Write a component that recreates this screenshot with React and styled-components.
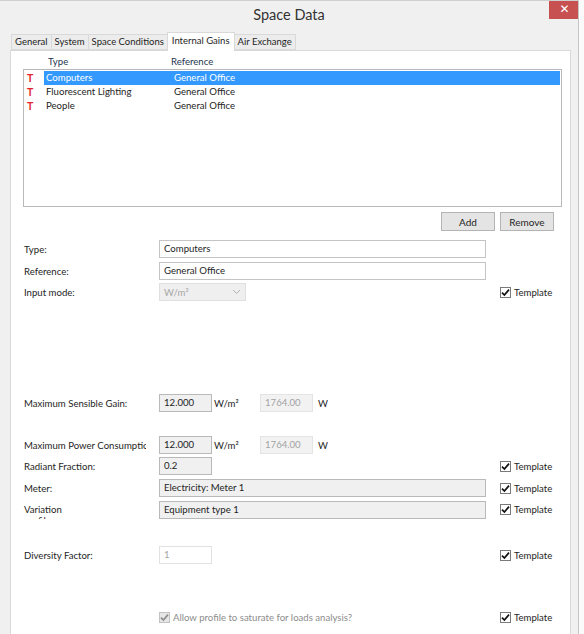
import React from 'react'
import styled, { createGlobalStyle } from 'styled-components'

const GlobalStyle = createGlobalStyle`
  html, body {
    margin: 0;
    padding: 0;
  }
  body {
    background: #fafafa;
    font-family: Lato, "Liberation Sans", sans-serif;
    font-size: 9.6px;
    color: #1e1e1e;
  }
`

/**
 * window chrome
 */
const Window = styled.div`
  width: 579px;
  height: 634px;
  box-sizing: border-box;
  display: flex;
  flex-direction: column;
  overflow: hidden;
  background: #f0f0f0;
  border-top: 1px solid #cfcfcf;
  border-right: 1px solid #c6c6c6;
`

const TitleBar = styled.header`
  height: 30px;
  flex: none;
  display: grid;
  grid-template-columns: 1fr auto 1fr;
  align-items: start;
`

const Title = styled.h1`
  grid-column: 2;
  margin: 0;
  line-height: 27px;
  font-size: 14.5px;
  font-weight: 400;
  color: #333;
`

const CloseButton = styled.button`
  grid-column: 3;
  justify-self: end;
  width: 31px;
  height: 19px;
  margin: -1px -2px 0 0;
  padding: 0;
  border: none;
  background: #c75050;
  color: #fff;
  font-family: "DejaVu Sans", sans-serif;
  font-size: 12px;
  font-weight: 700;
  line-height: 19px;
`

/**
 * tabs
 */
const TabStrip = styled.nav`
  display: flex;
  align-items: flex-end;
  height: 20px;
  flex: none;
  padding-left: 12px;
  margin-bottom: -1px;
  position: relative;
  z-index: 1;
`

const Tab = styled.div`
  height: ${p => (p.$active ? '19px' : '16px')};
  box-sizing: border-box;
  padding: 0 ${p => (p.$active ? '4px' : '3px')};
  margin-left: -1px;
  margin-bottom: ${p => (p.$active ? '0' : '1px')};
  border: 1px solid #d9d9d9;
  border-bottom: ${p => (p.$active ? 'none' : '1px solid #d9d9d9')};
  background: ${p => (p.$active ? '#fff' : '#ececec')};
  line-height: ${p => (p.$active ? '16px' : '14px')};
  font-size: 9.5px;
  color: #1e1e1e;
  white-space: nowrap;
`

const Panel = styled.section`
  flex: 1;
  margin-left: 10px;
  width: 561px;
  box-sizing: border-box;
  background: #fff;
  border: 1px solid #d9d9d9;
  border-bottom: none;
  padding: 4px 8px 0 12px;
  display: flex;
  flex-direction: column;
`

/**
 * gains list
 */
const ListHeader = styled.div`
  display: grid;
  grid-template-columns: 25px 123px 1fr;
  height: 14px;
  line-height: 13px;
  color: #1f3552;
`

const ListBox = styled.div`
  height: 138px;
  box-sizing: border-box;
  border: 1px solid #b9b9b9;
  padding: 1px 1px 0 0;
`

const Line = styled.div`
  display: grid;
  grid-template-columns: 20px 1fr;
  height: 14px;
  line-height: 14px;
`

const TemplateMark = styled.span`
  padding-left: 3px;
  color: #e3252b;
  font-weight: 700;
  font-size: 10.5px;
`

const Cells = styled.div`
  display: grid;
  grid-template-columns: 128px 1fr;
  background: ${p => (p.$selected ? '#3399ff' : 'transparent')};
  color: ${p => (p.$selected ? '#fff' : '#1e1e1e')};

  span {
    padding-left: 2px;
  }
`

const ButtonRow = styled.div`
  display: flex;
  justify-content: flex-end;
  gap: 5px;
  margin-top: 5px;
  padding-right: 8px;
`

const Button = styled.button`
  width: 54px;
  height: 19px;
  padding: 0;
  border: 1px solid #b4b4b4;
  background: #e4e4e4;
  font-family: inherit;
  font-size: 10px;
  color: #1e1e1e;
`

/**
 * form
 */
const Row = styled.div`
  display: grid;
  grid-template-columns: 136px 341px 1fr;
  align-items: center;
  height: 18px;
  margin-top: ${p => p.$gap}px;
`

const Label = styled.div`
  width: 122px;
  padding-left: 1px;
  overflow: hidden;
  white-space: nowrap;
  color: #1e1e1e;
`

const WrappedLabel = styled(Label)`
  width: 60px;
  white-space: normal;
  align-self: start;
  margin-top: 4px;
  height: 15px;
  line-height: 11px;
`

const Field = styled.div`
  width: ${p => p.$width}px;
  height: 18px;
  box-sizing: border-box;
  padding-left: 4px;
  line-height: 16px;
  white-space: nowrap;
  overflow: hidden;
  border: 1px solid ${p => ({ plain: '#c4c4c4', filled: '#b9b9b9', readout: '#e4e4e4', ghost: '#e2e2e2' }[p.$kind])};
  background: ${p => ({ plain: '#fff', filled: '#f0f0f0', readout: '#f2f2f2', ghost: '#fff' }[p.$kind])};
  color: ${p => (p.$kind === 'readout' || p.$kind === 'ghost' ? '#a3a3a3' : '#1e1e1e')};
`

const Select = styled.div`
  width: 87px;
  height: 18px;
  box-sizing: border-box;
  padding: 0 4px;
  display: flex;
  align-items: center;
  justify-content: space-between;
  border: 1px solid #e0e0e0;
  background: #efefef;
  color: #a8a8a8;
`

const Inline = styled.div`
  display: flex;
  align-items: center;
`

const Unit = styled.span`
  width: ${p => p.$width}px;
  padding-left: ${p => p.$pad}px;
  box-sizing: border-box;
  color: #1e1e1e;
`

const Tick = styled.label`
  display: flex;
  align-items: center;
  gap: 3px;
  color: ${p => (p.$disabled ? '#8c8c8c' : '#1e1e1e')};
`

const Box = styled.span`
  width: 11px;
  height: 11px;
  box-sizing: border-box;
  border: 1px solid ${p => (p.$disabled ? '#c2c2c2' : '#7a7a7a')};
  background: ${p => (p.$disabled ? '#e6e6e6' : '#fff')};
  display: flex;
  align-items: center;
  justify-content: center;
`

const Check = ({ disabled }) => (
  <Box $disabled={disabled}>
    <svg width="9" height="9" viewBox="0 0 9 9">
      <path d="M1 4.6 L3.4 7 L8 1.6" fill="none" stroke={disabled ? '#8e8e8e' : '#111'} strokeWidth="1.7" />
    </svg>
  </Box>
)

const CheckBox = ({ children, disabled }) => (
  <Tick $disabled={disabled}>
    <Check disabled={disabled} />
    {children}
  </Tick>
)

const Chevron = () => (
  <svg width="9" height="6" viewBox="0 0 9 6">
    <path d="M1 1 L4.5 4.5 L8 1" fill="none" stroke="#b0b0b0" strokeWidth="1" />
  </svg>
)

const gains = [
  { type: 'Computers', reference: 'General Office' },
  { type: 'Fluorescent Lighting', reference: 'General Office' },
  { type: 'People', reference: 'General Office' }
]

const tabs = ['General', 'System', 'Space Conditions', 'Internal Gains', 'Air Exchange']

// sensible/power gain: per-area value, unit and the computed total
const GainRow = ({ value }) => (
  <Inline>
    <Field $kind="filled" $width={53}>{value}</Field>
    <Unit $width={48} $pad={2}>W/m²</Unit>
    <Field $kind="readout" $width={53}>1764.00</Field>
    <Unit $width={20} $pad={5}>W</Unit>
  </Inline>
)

const App = () => {
  return (
    <>
      <GlobalStyle />
      <Window>
        <TitleBar>
          <Title>Space Data</Title>
          <CloseButton>✕</CloseButton>
        </TitleBar>

        <TabStrip>
          {tabs.map(t => (
            <Tab key={t} $active={t === 'Internal Gains'}>{t}</Tab>
          ))}
        </TabStrip>

        <Panel>
          <ListHeader>
            <span />
            <span>Type</span>
            <span>Reference</span>
          </ListHeader>
          <ListBox>
            {gains.map((g, i) => (
              <Line key={g.type}>
                <TemplateMark>T</TemplateMark>
                <Cells $selected={i === 0}>
                  <span>{g.type}</span>
                  <span>{g.reference}</span>
                </Cells>
              </Line>
            ))}
          </ListBox>

          <ButtonRow>
            <Button>Add</Button>
            <Button>Remove</Button>
          </ButtonRow>

          <Row $gap={9}>
            <Label>Type:</Label>
            <Field $kind="plain" $width={327}>Computers</Field>
          </Row>
          <Row $gap={4}>
            <Label>Reference:</Label>
            <Field $kind="plain" $width={327}>General Office</Field>
          </Row>
          <Row $gap={3}>
            <Label>Input mode:</Label>
            <Select>
              <span>W/m²</span>
              <Chevron />
            </Select>
            <CheckBox>Template</CheckBox>
          </Row>

          <Row $gap={93}>
            <Label>Maximum Sensible Gain:</Label>
            <GainRow value="12.000" />
          </Row>
          <Row $gap={24}>
            <Label>Maximum Power Consumption:</Label>
            <GainRow value="12.000" />
          </Row>
          <Row $gap={3}>
            <Label>Radiant Fraction:</Label>
            <Field $kind="filled" $width={53}>0.2</Field>
            <CheckBox>Template</CheckBox>
          </Row>
          <Row $gap={4}>
            <Label>Meter:</Label>
            <Field $kind="filled" $width={327}>Electricity: Meter 1</Field>
            <CheckBox>Template</CheckBox>
          </Row>
          <Row $gap={3}>
            <WrappedLabel>Variation profile:</WrappedLabel>
            <Field $kind="filled" $width={327}>Equipment type 1</Field>
            <CheckBox>Template</CheckBox>
          </Row>

          <Row $gap={28}>
            <Label>Diversity Factor:</Label>
            <Field $kind="ghost" $width={53}>1</Field>
            <CheckBox>Template</CheckBox>
          </Row>

          <Row $gap={44}>
            <span />
            <CheckBox disabled>Allow profile to saturate for loads analysis?</CheckBox>
            <CheckBox>Template</CheckBox>
          </Row>
        </Panel>
      </Window>
    </>
  )
}

export default App
